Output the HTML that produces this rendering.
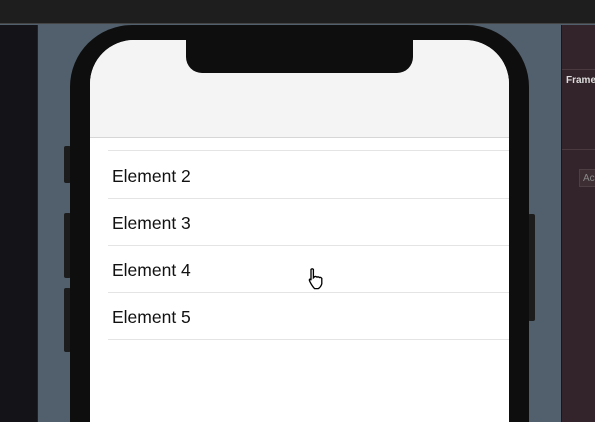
<!DOCTYPE html>
<html style="width:595px;height:422px;overflow:hidden"><head><style>
*{margin:0;padding:0;box-sizing:border-box}
body{width:595px;height:422px;overflow:hidden;background:#525f6c;position:relative;font-family:"Liberation Sans",sans-serif}
div{position:absolute}
.row{left:108px;right:0;height:47px;border-bottom:1px solid #e4e4e4;font-size:17.5px;color:#111;padding-left:4px;line-height:49px}
.btn{background:#1c1c1c;border-radius:2px;width:7px}
</style></head><body>
<div style="left:0;top:0;width:595px;height:24px;background:#1e1e1e;border-bottom:1px solid #444"></div>
<div style="left:0;top:25px;width:38px;height:397px;background:#141318;border-right:1px solid #222"></div>
<div style="left:561px;top:25px;width:34px;height:397px;background:#33232a;border-left:1px solid #1e1518"></div>
<div style="left:562px;top:69px;width:33px;height:1px;background:#4a3a40"></div>
<div style="left:566px;top:75px;font-size:10px;font-weight:bold;color:#ddd">Frame</div>
<div style="left:562px;top:149px;width:33px;height:1px;background:#4a3a40"></div>
<div style="left:579px;top:169px;width:20px;height:18px;background:#3d2e34;border:1px solid #4d3e44;font-size:10px;color:#888;padding:3px 0 0 3px">Ac</div>
<div class="btn" style="left:64px;top:146px;height:37px"></div>
<div class="btn" style="left:64px;top:213px;height:65px"></div>
<div class="btn" style="left:64px;top:288px;height:64px"></div>
<div class="btn" style="left:528px;top:214px;height:107px"></div>
<div style="left:70px;top:25px;width:459px;height:397px;background:#0e0e0e;border-radius:62px 62px 0 0"></div>
<div style="left:90px;top:40px;width:419px;height:382px;background:#fff;border-radius:44px 44px 0 0;overflow:hidden">
 <div style="left:0;top:0;width:419px;height:98px;background:#f4f4f4;border-bottom:1px solid #d6d6d6"></div>
 <div style="left:96px;top:-2px;width:227px;height:35px;background:#0e0e0e;border-radius:0 0 16px 16px"></div>
 <div style="left:18px;top:99px;width:401px;height:12px;border-bottom:1px solid #e4e4e4"></div>
 <div class="row" style="left:18px;top:112px">Element 2</div>
 <div class="row" style="left:18px;top:159px">Element 3</div>
 <div class="row" style="left:18px;top:206px">Element 4</div>
 <div class="row" style="left:18px;top:253px">Element 5</div>
</div>
<svg style="position:absolute;left:306px;top:267px" width="22" height="24" viewBox="0 0 18 20"><path d="M4 2 Q5 1 6 2 L6 9 L7 8 Q8 7.5 9 8.5 Q10 7.8 11 8.8 Q12 8.2 13 9.5 L13 14 Q12 17 10 18 L7 18 Q5 16 3 12 Q2 10 3.5 10 L4 11 Z" fill="#fff" stroke="#000" stroke-width="1.1"/></svg>
</body></html>
